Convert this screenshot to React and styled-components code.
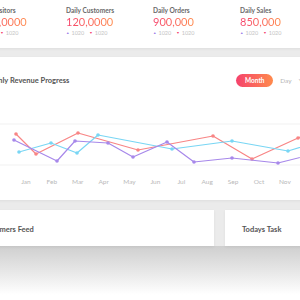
import React from "react";
import styled, { createGlobalStyle } from "styled-components";

const GlobalStyle = createGlobalStyle`
  body {
    margin: 0;
    background: #fff;
    font-family: Lato, "Open Sans", sans-serif;
  }
`;

const stats = [
  { label: "Daily Visitors", value: "1,20,0000" },
  { label: "Daily Customers", value: "120,0000" },
  { label: "Daily Orders", value: "900,000" },
  { label: "Daily Sales", value: "850,000" },
];

const months = ["Jan", "Feb", "Mar", "Apr", "May", "Jun", "Jul", "Aug", "Sep", "Oct", "Nov", "Dec"];

// screen coordinates, y measured from the top of the plot
const series = [
  {
    color: "#f88585",
    points: [[16, 16], [36, 36], [78, 15], [138, 32], [213, 18], [252, 41], [298, 20], [330, 8]],
  },
  {
    color: "#79d6f4",
    points: [[19, 34], [51, 25], [77, 35], [98, 17], [172, 31], [232, 23], [288, 33], [330, 20]],
  },
  {
    color: "#a788ea",
    points: [[14, 22], [57, 43], [75, 23], [108, 25], [133, 39], [167, 24], [194, 44], [232, 40], [278, 45], [330, 32]],
  },
];

const Screen = styled.div`
  width: 300px;
  height: 300px;
  overflow: hidden;
`;

const Page = styled.div`
  width: 360px;
  margin-left: -37px;
  background: #ebebeb;
  display: flex;
  flex-direction: column;
`;

const Card = styled.div`
  background: #fff;
  box-shadow: 0 1px 3px rgba(0, 0, 0, 0.06);
`;

const StatsCard = styled(Card)`
  height: 48px;
  box-sizing: border-box;
  padding: 6px 0 0 14px;
  display: grid;
  grid-template-columns: 89px repeat(3, 87px);
`;

const Stat = styled.div`
  display: flex;
  flex-direction: column;
`;

const StatLabel = styled.div`
  font-size: 6.6px;
  line-height: 9px;
  font-weight: 700;
  color: #6a6a6a;
`;

const StatValue = styled.div`
  font-size: 11px;
  line-height: 14px;
  width: max-content;
  background: linear-gradient(90deg, #f5426c, #ff8a4c);
  -webkit-background-clip: text;
  background-clip: text;
  color: transparent;
`;

const Trend = styled.div`
  display: flex;
  align-items: center;
  gap: 2px;
  font-size: 5.5px;
  line-height: 8px;
  color: #c4c4c4;
`;

const Arrow = styled.span`
  font-size: 3.5px;
  color: ${(p) => (p.$up ? "#9b7de8" : "#f5416c")};
  margin-left: ${(p) => (p.$up ? "0" : "3px")};
`;

const ChartCard = styled(Card)`
  margin-top: 9px;
  height: 143px;
  box-sizing: border-box;
  padding-top: 17px;
`;

const Header = styled.div`
  display: flex;
  align-items: center;
  padding: 0 12px 0 17px;
`;

const Title = styled.div`
  font-size: 7.5px;
  font-weight: 700;
  color: #555;
  line-height: 10px;
`;

const Tabs = styled.div`
  margin-left: auto;
  display: flex;
  align-items: center;
  gap: 7px;
`;

const Tab = styled.div`
  height: 13px;
  display: flex;
  align-items: center;
  justify-content: center;
  font-size: 6.5px;
  font-weight: ${(p) => (p.$active ? 700 : 400)};
  color: ${(p) => (p.$active ? "#fff" : "#b5b5b5")};
  width: ${(p) => (p.$active ? "37px" : "auto")};
  border-radius: 7px;
  background: ${(p) => (p.$active ? "linear-gradient(90deg, #f5426c, #ff8a4c)" : "none")};
`;

const ChartArea = styled.div`
  margin-top: 31px;
  padding-left: 37px;
`;

const Plot = styled.svg`
  display: block;
  width: 323px;
  height: 52px;
  overflow: visible;
`;

const MonthRow = styled.div`
  margin-top: 7px;
  padding-left: 13px;
  display: grid;
  grid-template-columns: repeat(12, 25.9px);
`;

const Month = styled.div`
  text-align: center;
  font-size: 6.5px;
  line-height: 10px;
  color: #b9b9b9;
`;

const BottomRow = styled.div`
  margin-top: 10px;
  display: grid;
  grid-template-columns: 251px 1fr;
  gap: 11px;
`;

const BottomCard = styled(Card)`
  height: 36px;
  box-sizing: border-box;
  padding: 15px 0 0 17px;
`;

const Fade = styled.div`
  height: 54px;
  background: linear-gradient(180deg, #cfcfcf 0%, #e6e6e6 45%, #fff 90%);
`;

const App = () => {
  return (
    <Screen>
      <GlobalStyle />
      <Page>
        <StatsCard>
          {stats.map((s) => (
            <Stat key={s.label}>
              <StatLabel>{s.label}</StatLabel>
              <StatValue>{s.value}</StatValue>
              <Trend>
                <Arrow $up>▲</Arrow>
                <span>1020</span>
                <Arrow>▼</Arrow>
                <span>1020</span>
              </Trend>
            </Stat>
          ))}
        </StatsCard>

        <ChartCard>
          <Header>
            <Title>Monthly Revenue Progress</Title>
            <Tabs>
              <Tab $active>Month</Tab>
              <Tab>Day</Tab>
              <Tab>Year</Tab>
            </Tabs>
          </Header>
          <ChartArea>
            <Plot viewBox="0 0 323 52">
              <line x1="0" x2="323" y1="6" y2="6" stroke="#f1f1f1" strokeWidth="1" />
              <line x1="0" x2="323" y1="47" y2="47" stroke="#f1f1f1" strokeWidth="1" />
              {series.map((s) => (
                <g key={s.color}>
                  <polyline
                    points={s.points.map((p) => p.join(",")).join(" ")}
                    fill="none"
                    stroke={s.color}
                    strokeWidth="1.2"
                    strokeLinejoin="round"
                  />
                  {s.points.map(([x, y]) => (
                    <circle key={x} cx={x} cy={y} r="1.8" fill={s.color} />
                  ))}
                </g>
              ))}
            </Plot>
            <MonthRow>
              {months.map((m) => (
                <Month key={m}>{m}</Month>
              ))}
            </MonthRow>
          </ChartArea>
        </ChartCard>

        <BottomRow>
          <BottomCard>
            <Title>Customers Feed</Title>
          </BottomCard>
          <BottomCard>
            <Title>Todays Task</Title>
          </BottomCard>
        </BottomRow>
      </Page>
      <Fade />
    </Screen>
  );
};

export default App;
